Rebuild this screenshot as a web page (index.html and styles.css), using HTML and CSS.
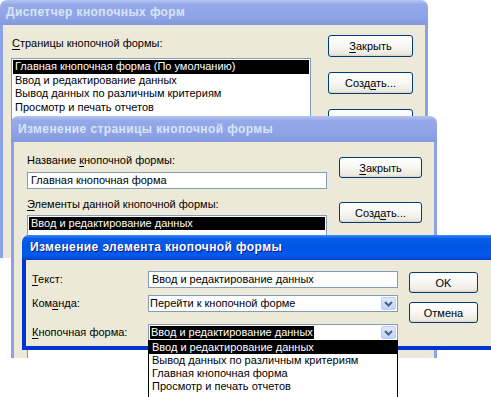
FILE: index.html
```html
<!DOCTYPE html>
<html>
    <head>
        <title>Кнопочные формы</title>
        <link rel="stylesheet" href="styles.css">
    </head>
    <body>
        <div class="desk">

            <!-- switchboard manager -->
            <div class="win inactive w1">
                <div class="title">Диспетчер кнопочных форм</div>
                <div class="body">
                    <div class="main">
                        <div class="label"><u>С</u>траницы кнопочной формы:</div>
                        <div class="listbox">
                            <div class="item sel">Главная кнопочная форма (По умолчанию)</div>
                            <div class="item">Ввод и редактирование данных</div>
                            <div class="item">Вывод данных по различным критериям</div>
                            <div class="item">Просмотр и печать отчетов</div>
                        </div>
                    </div>
                    <div class="buttons">
                        <button class="btn"><u>З</u>акрыть</button>
                        <button class="btn">Созд<u>а</u>ть...</button>
                        <button class="btn"><u>И</u>зменить...</button>
                    </div>
                </div>
            </div>

            <!-- edit switchboard page -->
            <div class="win inactive w2">
                <div class="title">Изменение страницы кнопочной формы</div>
                <div class="body">
                    <div class="main">
                        <div class="label">Название <u>к</u>нопочной формы:</div>
                        <div class="field">Главная кнопочная форма</div>
                        <div class="label second"><u>Э</u>лементы данной кнопочной формы:</div>
                        <div class="listbox">
                            <div class="item sel">Ввод и редактирование данных</div>
                        </div>
                    </div>
                    <div class="buttons">
                        <button class="btn"><u>З</u>акрыть</button>
                        <button class="btn">Созд<u>а</u>ть...</button>
                    </div>
                </div>
            </div>

            <!-- edit switchboard item -->
            <div class="win active w3">
                <div class="title">Изменение элемента кнопочной формы</div>
                <div class="body">
                    <div class="fields">
                        <div class="label"><u>Т</u>екст:</div>
                        <div class="field">Ввод и редактирование данных</div>

                        <div class="label">Ком<u>а</u>нда:</div>
                        <div class="field combo">
                            <span>Перейти к кнопочной форме</span>
                            <span class="arrow"><svg width="9" height="6" viewBox="0 0 9 6"><path d="M1 1l3.5 3.5L8 1" fill="none" stroke="#4d6185" stroke-width="2"/></svg></span>
                        </div>

                        <div class="label"><u>К</u>нопочная форма:</div>
                        <div class="field combo">
                            <span class="hl">Ввод и редактирование данных</span>
                            <span class="arrow"><svg width="9" height="6" viewBox="0 0 9 6"><path d="M1 1l3.5 3.5L8 1" fill="none" stroke="#4d6185" stroke-width="2"/></svg></span>
                        </div>
                    </div>
                    <div class="buttons">
                        <button class="btn">OK</button>
                        <button class="btn">Отмена</button>
                    </div>
                </div>
            </div>

            <!-- open combo list -->
            <div class="dropdown">
                <div class="item sel">Ввод и редактирование данных</div>
                <div class="item">Вывод данных по различным критериям</div>
                <div class="item">Главная кнопочная форма</div>
                <div class="item">Просмотр и печать отчетов</div>
            </div>
        </div>
    </body>
</html>
```

FILE: styles.css
```css
body {
    margin: 0;
    background-color: #fff;
    font-family: "Liberation Sans", Arial, sans-serif;
    font-size: 11px;
    color: #000;
    overflow: hidden;
}
.desk {
    position: relative;
    width: 491px;
    height: 397px;
}
u {
    text-decoration-thickness: 1px;
    text-underline-offset: 2px;
}

/* windows */
.win {
    position: absolute;
    box-sizing: border-box;
    display: flex;
    flex-direction: column;
    border-radius: 7px 7px 0 0;
    overflow: hidden;
}
.title {
    flex: none;
    height: 25px;
    line-height: 25px;
    padding-left: 6px;
    font-weight: bold;
    font-size: 12px;
    letter-spacing: 0.4px;
    white-space: nowrap;
}
.body {
    flex: 1;
    display: flex;
    background-color: #ece9d8;
    border: 3px solid;
    border-top: none;
}
.inactive .title {
    background: linear-gradient(180deg, #b4c4f2 0%, #95a9e8 18%, #8ea3e6 70%, #8299e0 100%);
    color: #d8e4f8;
}
.inactive .body {
    border-color: #8da2e6;
}
.active .title {
    background: linear-gradient(180deg, #3d8bff 0%, #0a5ce8 14%, #0055e5 50%, #0059ee 84%, #003fc0 100%);
    color: #fff;
    text-shadow: 1px 1px 0 #0a1a80;
}
.active .body {
    border-color: #0036d0;
    border-width: 4px;
}

.w1 {
    left: 0;
    top: 0;
    width: 428px;
    height: 258px;
}
.w1 .body {
    padding: 10px 12px 0 8px;
    gap: 17px;
}
.w1 .main {
    width: 300px;
}
.w1 .label {
    height: 14px;
    line-height: 14px;
    padding-left: 1px;
    margin: 1px 0 8px;
}
.w1 .listbox .item {
    height: 13.5px;
    line-height: 13.5px;
}
.w1 .buttons {
    gap: 15px;
}
.w1 .btn {
    width: 85px;
    height: 22px;
}

.w2 {
    left: 11px;
    top: 116px;
    width: 426px;
    height: 242px;
}
.w2 .title {
    height: 26px;
    line-height: 26px;
    padding-left: 7px;
}
.w2 .body {
    padding: 11px 12px 0 13px;
    gap: 12px;
}
.w2 .main {
    width: 300px;
}
.w2 .label {
    height: 14px;
    line-height: 14px;
}
.w2 .label.second {
    margin-top: 8px;
    margin-bottom: 4px;
}
.w2 .field {
    margin-top: 5px;
    width: 300px;
}
.w2 .buttons {
    padding-top: 4px;
    gap: 24px;
}
.w2 .btn {
    width: 83px;
    height: 21px;
}

.w3 {
    left: 22px;
    top: 235px;
    width: 480px;
    height: 115px;
}
.w3 .title {
    padding-left: 8px;
}
.w3 .body {
    padding: 11px 0 0 6px;
    gap: 11px;
}
.fields {
    display: grid;
    grid-template-columns: 116px 250px;
    grid-template-rows: 24px 29px 17px;
    align-items: start;
}
.fields .label {
    height: 17px;
    line-height: 17px;
}
.w3 .buttons {
    padding-top: 1px;
    gap: 9px;
}
.w3 .btn {
    height: 21px;
    width: 69px;
}

/* controls */
.buttons {
    display: flex;
    flex-direction: column;
}
.btn {
    box-sizing: border-box;
    border: 1px solid #003c74;
    border-radius: 3px;
    background: linear-gradient(180deg, #fff 0%, #f7f7f4 50%, #ece9de 90%, #d6d0c5 100%);
    font-family: inherit;
    font-size: 11px;
    color: #000;
    padding: 0;
}
.field {
    box-sizing: border-box;
    height: 17px;
    line-height: 15px;
    border: 1px solid #7f9db9;
    background-color: #fff;
    padding-left: 3px;
    white-space: nowrap;
    overflow: hidden;
}
.combo {
    display: flex;
    align-items: center;
    justify-content: space-between;
    padding-right: 1px;
    padding-left: 1px;
}
.combo .hl {
    background-color: #000;
    color: #fff;
    line-height: 13px;
    padding: 0 1px;
}
.arrow {
    box-sizing: border-box;
    width: 15px;
    height: 13px;
    border: 1px solid #b9cdf6;
    border-radius: 2px;
    background: linear-gradient(180deg, #e0e9fe, #c1d3fb);
    display: flex;
    align-items: center;
    justify-content: center;
}
.listbox {
    box-sizing: border-box;
    border: 1px solid #7f9db9;
    background-color: #fff;
    padding: 1px;
    height: 200px;
}
.item {
    height: 13px;
    line-height: 13px;
    padding-left: 2px;
    white-space: nowrap;
}
.sel {
    background-color: #000;
    color: #fff;
}
.dropdown {
    position: absolute;
    left: 148px;
    top: 340px;
    width: 250px;
    box-sizing: border-box;
    border: 1px solid #000;
    background-color: #fff;
    padding-bottom: 4px;
}
.dropdown .item {
    padding-left: 3px;
}
```
